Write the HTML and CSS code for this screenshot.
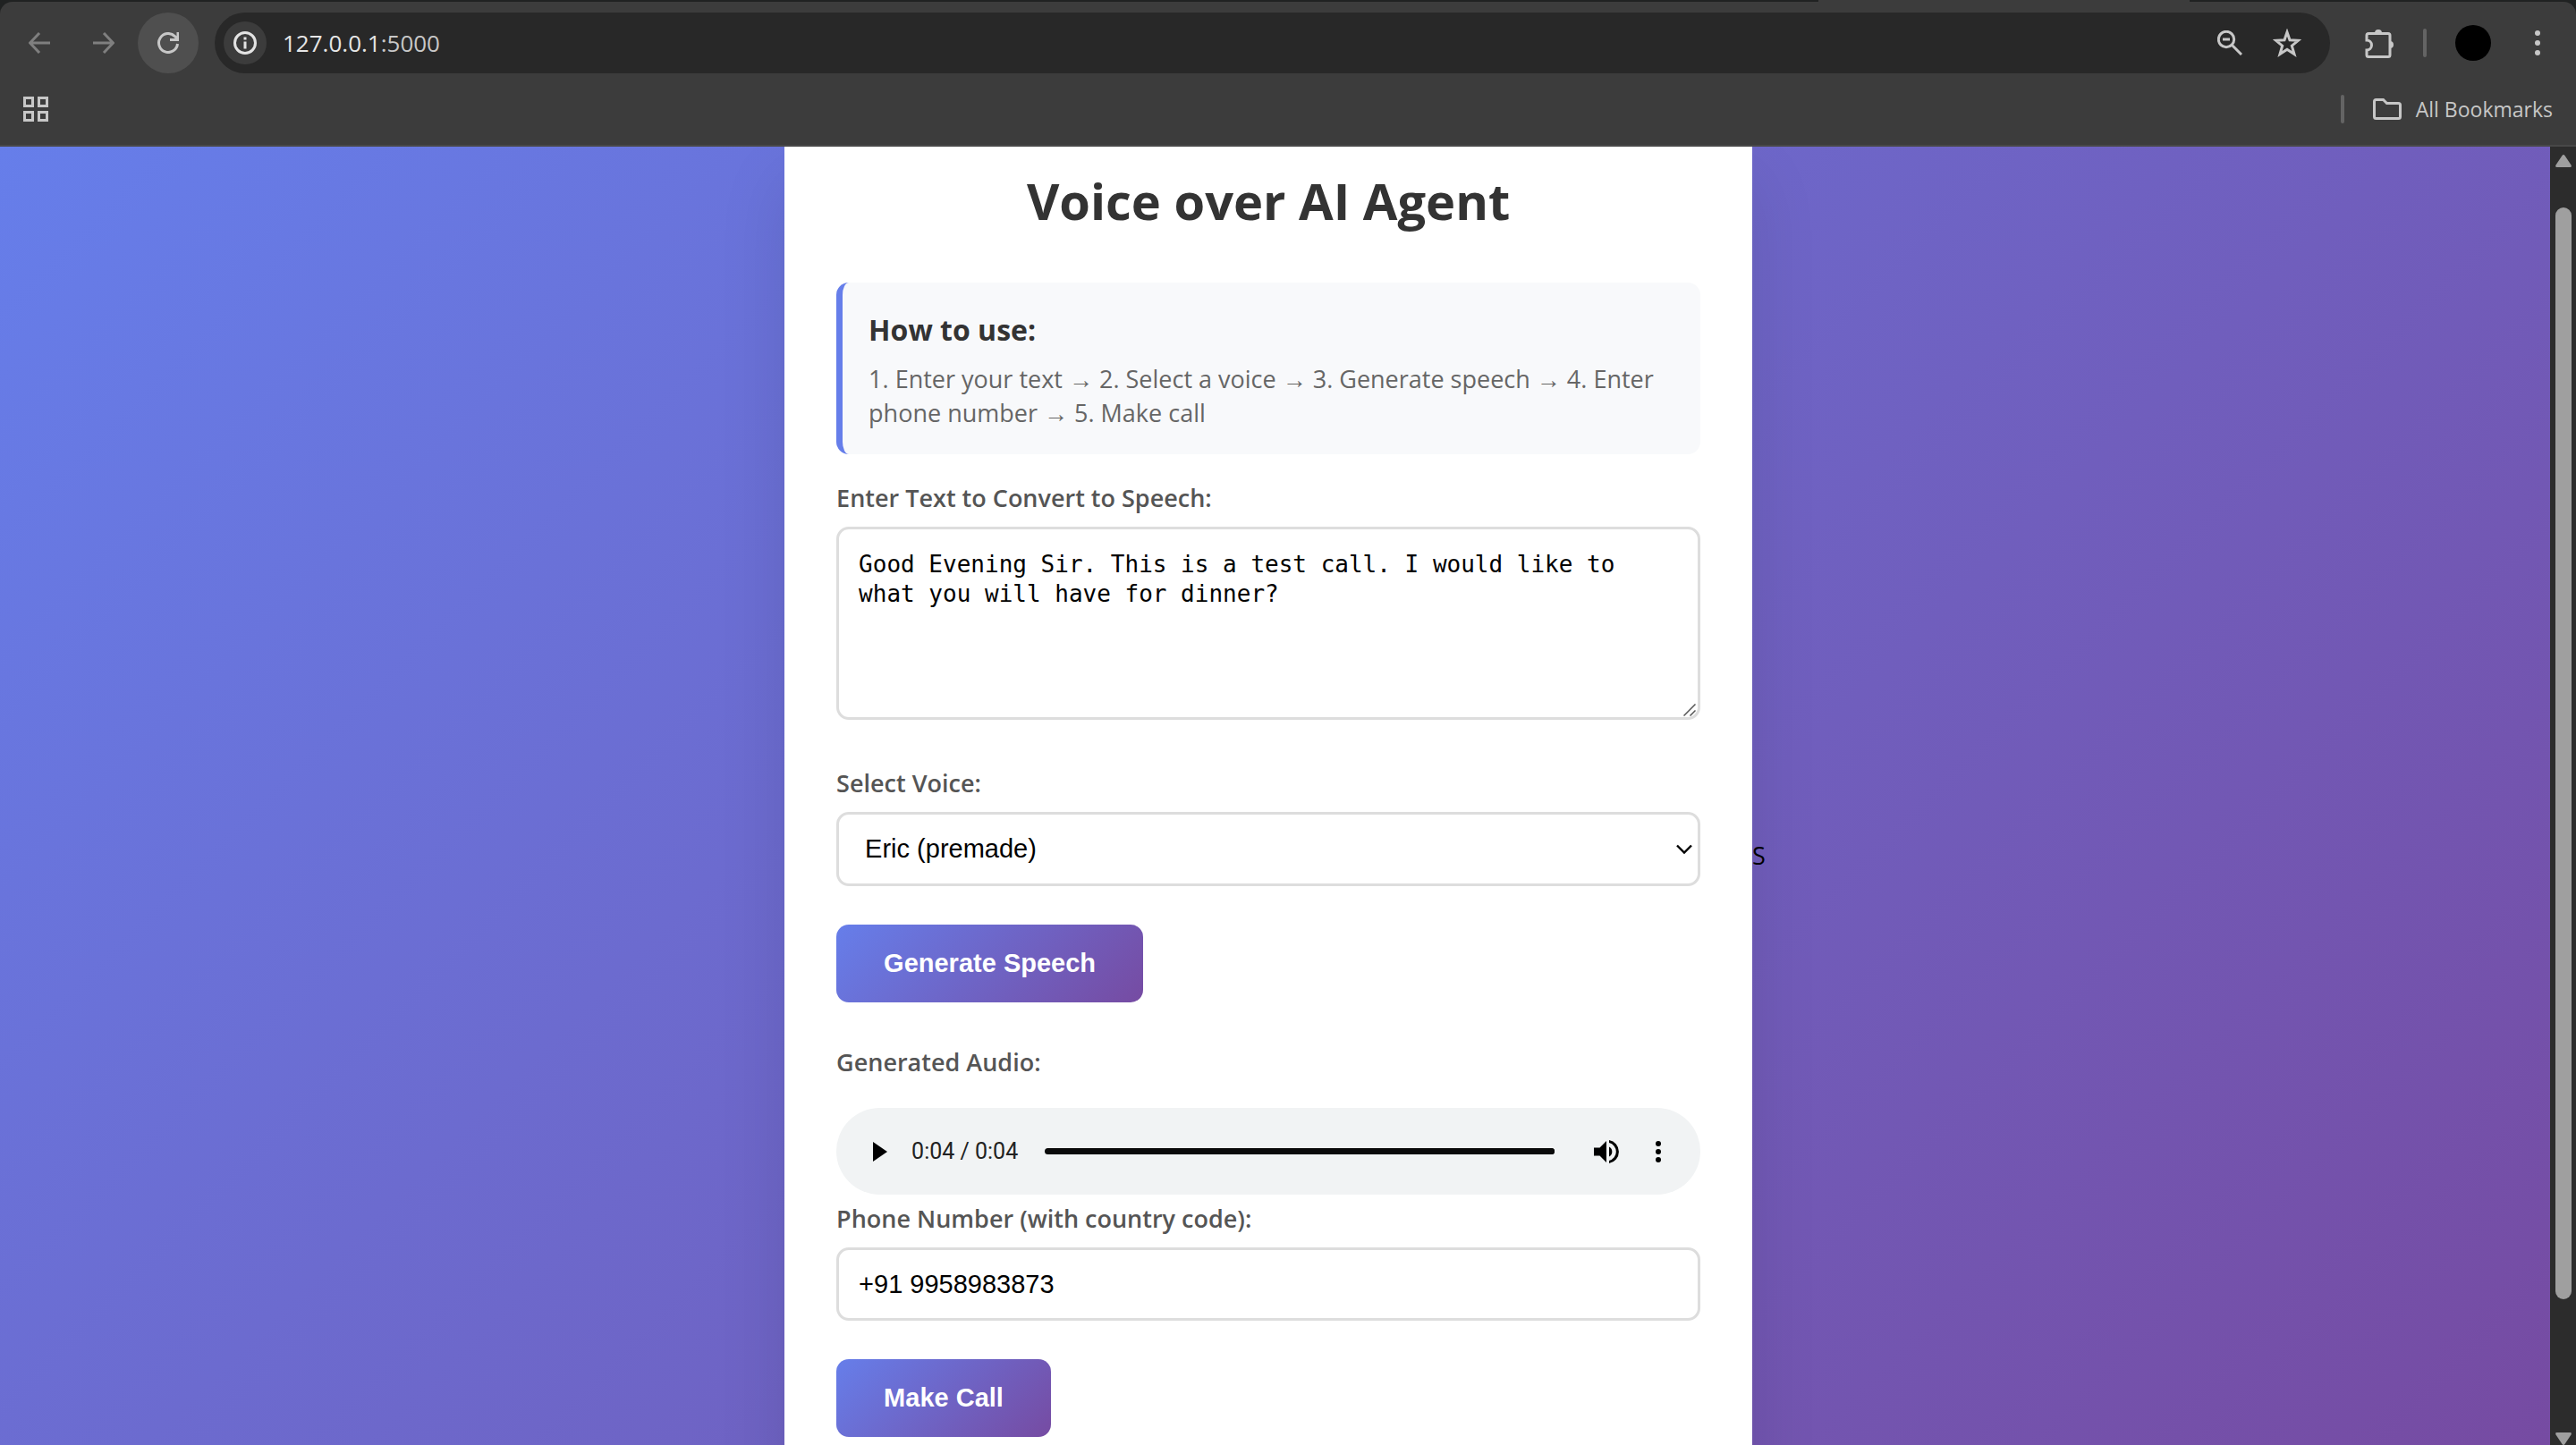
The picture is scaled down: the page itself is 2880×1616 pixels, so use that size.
FILE: index.html
```html
<!DOCTYPE html>
<html lang="en">
<head>
<meta charset="utf-8">
<title>Voice over AI Agent</title>
<link rel="stylesheet" href="styles.css">
</head>
<body>
<header class="browser">
  <div class="tab-strip"><span class="active-tab"></span></div>
  <div class="chrome">
    <div class="toolbar">
      <div class="nav">
        <button class="nav-button dim" aria-label="Back"><svg width="24" height="24" viewBox="0 0 24 24"><path d="M12 1 1.500 12 12 23M2 12h22"/></svg></button>
        <button class="nav-button dim" aria-label="Forward"><svg width="24" height="24" viewBox="0 0 24 24"><path d="M12 1 22.500 12 12 23M22 12H0"/></svg></button>
        <button class="nav-button reload" aria-label="Reload"><svg width="24" height="24" viewBox="0 0 24 24"><path d="M22.500 13A10.500 10.500 0 1 1 19.500 4.600L23 8.500M23 0v8.500h-9"/></svg></button>
      </div>
      <div class="address">
        <button class="site-info" aria-label="Site information"><svg width="26" height="26" viewBox="0 0 26 26"><circle cx="13" cy="13" r="11.500"/><path d="M13 11.500v8M13 6.500v3"/></svg></button>
        <span class="url">127.0.0.1<span class="port">:5000</span></span>
        <button class="icon-button" aria-label="Zoom"><svg width="28" height="28" viewBox="0 0 28 28"><circle cx="10" cy="10" r="8.700"/><path d="M6 10h8M16.500 16.500 27 27"/></svg></button>
        <button class="icon-button" aria-label="Bookmark this tab"><svg width="32" height="32" viewBox="0 0 32 32"><path d="m16 4 3 8.700 9.500.6-7.200 5.900 2.700 9.300-8-5.300-8 5.300 2.700-9.300-7.200-5.900 9.500-.6z"/></svg></button>
      </div>
      <div class="actions">
        <button class="icon-button" aria-label="Extensions"><svg width="34" height="34" viewBox="0 0 34 34"><path d="M3 14V8.500Q3 6.500 5 6.500h22q2 0 2 2v22q0 2-2 2H5q-2 0-2-2V25a5.500 5.500 0 0 0 0-11z"/><path class="solid" d="M12 6a4 4 0 0 1 8 0zM29 15a4 4 0 0 1 0 8z"/></svg></button>
        <span class="divider"></span>
        <button class="avatar" aria-label="Profile"></button>
        <button class="icon-button" aria-label="Menu"><svg width="8" height="28" viewBox="0 0 8 28"><g class="solid"><circle cx="4" cy="3" r="3"/><circle cx="4" cy="14" r="3"/><circle cx="4" cy="25" r="3"/></g></svg></button>
      </div>
    </div>
    <div class="bookmarks">
      <button class="icon-button" aria-label="Apps"><svg width="28" height="28" viewBox="0 0 28 28"><path d="M1.500 1.500h9v9h-9zM17.500 1.500h9v9h-9zM1.500 17.500h9v9h-9zM17.500 17.500h9v9h-9z"/></svg></button>
      <div class="bookmarks-end">
        <span class="divider"></span>
        <button class="all-bookmarks"><svg width="32" height="24" viewBox="0 0 32 24"><path d="M3.500 1.500h8l4 4h13q2 0 2 2v13q0 2-2 2h-25q-2 0-2-2v-17q0-2 2-2z"/></svg>All Bookmarks</button>
      </div>
    </div>
  </div>
</header>
<div class="window">
  <main class="page">
    <section class="card">
      <h1>Voice over AI Agent</h1>
      <div class="info">
        <h3>How to use:</h3>
        <p>1. Enter your text → 2. Select a voice → 3. Generate speech → 4. Enter phone number → 5. Make call</p>
      </div>
      <form class="form">
        <div class="group text-group">
          <label for="text">Enter Text to Convert to Speech:</label>
          <div class="field">
            <textarea id="text">Good Evening Sir. This is a test call. I would like to what you will have for dinner?</textarea>
            <svg class="resizer" width="14" height="14" viewBox="0 0 14 14"><path d="M.500 13.500l13-13M7.500 13.500l6-6"/></svg>
          </div>
        </div>
        <div class="group">
          <label for="voice">Select Voice:</label>
          <div class="field">
            <select id="voice"><option>Eric (premade)</option></select>
            <svg class="chevron" width="18" height="12" viewBox="0 0 18 12"><path d="m1 1.500 8 8 8-8"/></svg>
          </div>
        </div>
        <button type="button" class="primary">Generate Speech</button>
        <div class="audio-group">
          <label for="seek">Generated Audio:</label>
          <div class="player">
            <button type="button" class="play" aria-label="Play"><svg width="16" height="22" viewBox="0 0 16 22"><path d="M0 0v22l16-11z"/></svg></button>
            <span class="time">0:04 / 0:04</span>
            <input id="seek" class="seek" type="range" min="0" max="4" value="4">
            <button type="button" class="volume" aria-label="Mute"><svg width="28" height="26" viewBox="0 0 28 26"><path d="M0 8.500h6.500L14 1v24l-7.500-7.500H0zM17 7.500a6.200 6.200 0 0 1 0 11zM17 0a13.200 13.200 0 0 1 0 26v-3a10.300 10.300 0 0 0 0-20z"/></svg></button>
            <button type="button" class="more" aria-label="More options"><svg width="6" height="24" viewBox="0 0 6 24"><circle cx="3" cy="3" r="3"/><circle cx="3" cy="12" r="3"/><circle cx="3" cy="21" r="3"/></svg></button>
          </div>
        </div>
        <div class="group">
          <label for="phone">Phone Number (with country code):</label>
          <input id="phone" type="tel" value="+91 9958983873">
        </div>
        <button type="button" class="primary">Make Call</button>
      </form>
    </section>
    <span class="stray">S</span>
  </main>
  <div class="scrollbar">
    <svg width="18" height="14" viewBox="0 0 18 14"><path d="M7.500 1q1.500-2 3 0l7 10.500q1 2.500-1 2.500h-15q-2 0-1-2.500z"/></svg>
    <span class="thumb"></span>
    <span class="track-rest"></span>
    <svg width="18" height="14" viewBox="0 0 18 14"><path d="M7.500 13q1.500 2 3 0l7-10.500q1-2.500-1-2.500h-15q-2 0-1 2.500z"/></svg>
  </div>
</div>
</body>
</html>
```
FILE: styles.css
```css
* {
  box-sizing: border-box;
}

body {
  display: flex;
  flex-direction: column;
  height: 100vh;
  margin: 0;
  overflow: hidden;
  font-family: "Segoe UI", "Open Sans", sans-serif;
  font-size: 27px;
}

button {
  display: flex;
  align-items: center;
  justify-content: center;
  padding: 0;
  border: 0;
  background: none;
  color: inherit;
  font: inherit;
}

svg {
  display: block;
  flex: none;
}

/* Browser frame */
.browser {
  position: relative;
  flex: none;
  padding-top: 2px;
  background: #202222;
}

.active-tab {
  position: absolute;
  top: 0;
  left: 70.6%;
  width: 14.4%;
  height: 2px;
  background: #3c3c3c;
}

.chrome {
  padding-bottom: 12px;
  border-bottom: 2px solid #484848;
  border-radius: 14px 14px 0 0;
  background: #3c3c3c;
  color: #c7c7c7;
}

.browser svg {
  fill: none;
  stroke: #c7c7c7;
  stroke-width: 3;
}

.browser .solid {
  fill: #c7c7c7;
  stroke: none;
}

.toolbar {
  display: flex;
  align-items: center;
  height: 92px;
  padding: 0 39px 0 10px;
}

.nav {
  display: flex;
  gap: 4px;
  margin-right: 18px;
}

.nav-button {
  width: 68px;
  height: 68px;
  border-radius: 50%;
}

.browser .dim svg {
  stroke: #7f7f7f;
}

.reload {
  background: #4f4f4f;
}

.address {
  display: flex;
  flex: 1;
  align-items: center;
  gap: 34px;
  height: 68px;
  padding: 0 32px 0 10px;
  border-radius: 34px;
  background: #282828;
}

.site-info {
  width: 48px;
  height: 48px;
  margin-right: -16px;
  border-radius: 50%;
  background: #3c3c3c;
}

.browser .site-info svg {
  stroke: #e3e3e3;
}

.url {
  flex: 1;
  color: #e6e6e6;
  font-size: 26px;
}

.port {
  color: #c7c7c7;
}

.actions {
  display: flex;
  align-items: center;
  gap: 32px;
  margin-left: 38px;
}

.divider {
  width: 4px;
  height: 32px;
  border-radius: 2px;
  background: #646464;
}

.avatar {
  width: 40px;
  height: 40px;
  margin-right: 16px;
  border-radius: 50%;
  background: #000;
}

.bookmarks {
  display: flex;
  align-items: center;
  justify-content: space-between;
  height: 56px;
  padding: 0 26px;
}

.bookmarks-end {
  display: flex;
  align-items: center;
  gap: 32px;
}

.all-bookmarks {
  gap: 16px;
  font-size: 23px;
}

/* Page */
.window {
  display: flex;
  flex: 1;
  min-height: 0;
}

.page {
  display: flex;
  flex: 1;
  align-items: flex-start;
  justify-content: center;
  overflow: hidden;
  background: linear-gradient(135deg, #667eea 0%, #764ba2 100%);
}

.card {
  width: 1082px;
  padding: 22px 58px 143px;
  background: #fff;
  box-shadow: 0 36px 72px rgba(0, 0, 0, 0.1);
}

.stray {
  margin-top: 774px;
  line-height: 38px;
}

h1 {
  margin: 0 0 54px;
  color: #333;
  font-size: 56px;
  line-height: 76px;
  text-align: center;
}

.info {
  margin-bottom: 30px;
  padding: 27px 29px;
  border-left: 7px solid #667eea;
  border-radius: 14px;
  background: #f8f9fb;
}

.info h3 {
  margin: 0 0 10px;
  color: #333;
  font-size: 32px;
  line-height: 52px;
}

.info p {
  margin: 0;
  color: #666;
  line-height: 38px;
}

.form {
  display: flex;
  flex-direction: column;
  align-items: flex-start;
}

.group,
.audio-group {
  width: 100%;
  margin-bottom: 43px;
}

.text-group {
  margin-bottom: 52px;
}

label {
  display: block;
  margin-bottom: 13px;
  color: #555;
  font-weight: 600;
  line-height: 38px;
}

.field {
  position: relative;
}

textarea,
select,
input[type="tel"] {
  display: block;
  width: 100%;
  height: 83px;
  margin: 0;
  padding: 22px;
  border: 3px solid #ddd;
  border-radius: 14px;
  outline: 0;
  background: #fff;
  color: #000;
  font: 29px/33px Arial, "Liberation Sans", sans-serif;
}

input[type="tel"] {
  height: 82px;
}

textarea {
  height: 216px;
  padding-top: 23px;
  font: 26px/33px Consolas, "DejaVu Sans Mono", monospace;
  resize: none;
}

select {
  padding: 0 29px;
  appearance: none;
}

.resizer,
.chevron {
  position: absolute;
  fill: none;
  pointer-events: none;
}

.resizer {
  right: 5px;
  bottom: 4px;
  stroke: #555;
  stroke-width: 1.5;
}

.chevron {
  top: 36px;
  right: 9px;
  stroke: #000;
  stroke-width: 2.4;
}

.primary {
  height: 87px;
  padding: 0 53px;
  border-radius: 14px;
  background: linear-gradient(135deg, #667eea 0%, #764ba2 100%);
  color: #fff;
  font: bold 29px/33px Arial, "Liberation Sans", sans-serif;
}

.audio-group {
  margin: 48px 0 8px;
}

.audio-group label {
  margin-bottom: 32px;
}

/* Audio player */
.player {
  display: flex;
  align-items: center;
  height: 97px;
  padding: 0 44px 0 41px;
  border-radius: 49px;
  background: #f1f3f4;
}

.play {
  margin-right: 27px;
}

.time {
  margin-right: 30px;
  color: #222;
  font: 25px/32px Roboto, sans-serif;
}

.seek {
  flex: 1;
  min-width: 0;
  height: 7px;
  margin: 0;
  border-radius: 4px;
  appearance: none;
  background: #0a0a0a;
}

.seek::-webkit-slider-thumb {
  width: 7px;
  height: 7px;
  border-radius: 50%;
  appearance: none;
  background: #0a0a0a;
}

.volume {
  margin: 0 41px 0 44px;
}

/* Scrollbar */
.scrollbar {
  display: flex;
  flex: none;
  flex-direction: column;
  align-items: center;
  width: 29px;
  padding-top: 9px;
  background: #2c2c2c;
}

.scrollbar svg {
  fill: #9f9f9f;
}

.thumb {
  flex: 1222;
  width: 18px;
  margin-top: 45px;
  border-radius: 9px;
  background: #9f9f9f;
}

.track-rest {
  flex: 149;
}
```
